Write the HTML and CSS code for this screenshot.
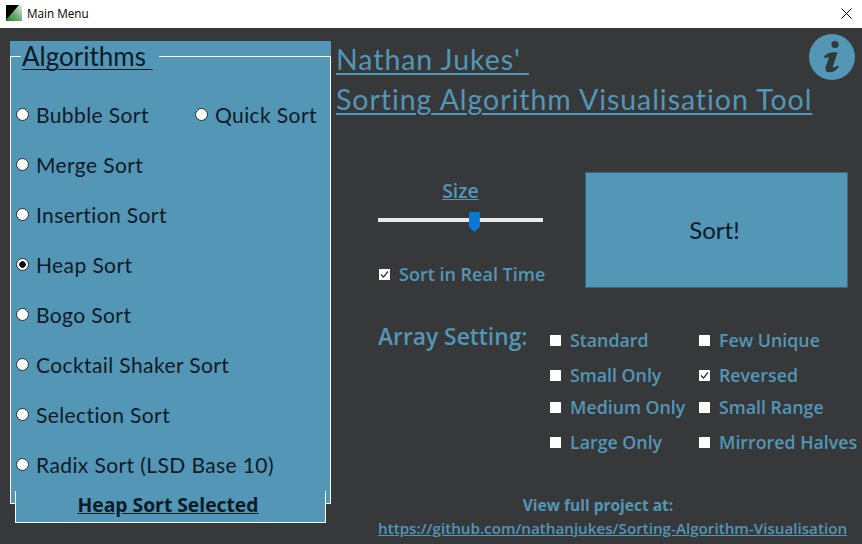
FILE: index.html
```html
<!DOCTYPE html>
<html lang="en">
<head>
    <meta charset="UTF-8">
    <title>Main Menu</title>
    <link rel="stylesheet" href="styles.css">
</head>
<body>
    <div class="titlebar">
        <svg class="app-icon" width="16" height="16" viewBox="0 0 16 16">
            <defs>
                <linearGradient id="corner" x1="0" y1="1" x2="1" y2="0">
                    <stop offset="0" stop-color="#0f8a1e"/>
                    <stop offset="0.55" stop-color="#7fb383"/>
                    <stop offset="1" stop-color="#e8ebe8"/>
                </linearGradient>
            </defs>
            <rect width="16" height="16" fill="url(#corner)"/>
            <polygon points="0,0 13,0 0,15" fill="#000"/>
        </svg>
        <span class="window-title">Main Menu</span>
        <svg class="close-icon" width="11" height="11" viewBox="0 0 11 11">
            <path d="M0.5 0.5L10.5 10.5M10.5 0.5L0.5 10.5" stroke="#000" stroke-width="1" fill="none"/>
        </svg>
    </div>

    <div class="window">
        <div class="side">
            <div class="panel">
                <fieldset class="algos">
                    <legend>Algorithms&nbsp;</legend>
                    <div class="algo-row first">
                        <label class="algo bubble"><input type="radio" name="algo"><span>Bubble Sort</span></label>
                        <label class="algo"><input type="radio" name="algo"><span>Quick Sort</span></label>
                    </div>
                    <div class="algo-row"><label class="algo"><input type="radio" name="algo"><span>Merge Sort</span></label></div>
                    <div class="algo-row"><label class="algo"><input type="radio" name="algo"><span>Insertion Sort</span></label></div>
                    <div class="algo-row"><label class="algo"><input type="radio" name="algo" checked><span>Heap Sort</span></label></div>
                    <div class="algo-row"><label class="algo"><input type="radio" name="algo"><span>Bogo Sort</span></label></div>
                    <div class="algo-row"><label class="algo"><input type="radio" name="algo"><span>Cocktail Shaker Sort</span></label></div>
                    <div class="algo-row"><label class="algo"><input type="radio" name="algo"><span>Selection Sort</span></label></div>
                    <div class="algo-row"><label class="algo"><input type="radio" name="algo"><span>Radix Sort (LSD Base 10)</span></label></div>
                </fieldset>
            </div>
            <div class="selected">Heap Sort Selected</div>
        </div>

        <div class="main">
            <div class="header">
                <h1>Nathan Jukes'&nbsp;<br>Sorting Algorithm Visualisation Tool</h1>
                <svg class="info-icon" width="46" height="46" viewBox="0 0 46 46">
                    <circle cx="23" cy="23" r="23" fill="#5396b6"/>
                    <circle cx="26" cy="10.5" r="3.6" fill="#33383c"/>
                    <path d="M15 22.5C18 18.5 23 18 28.5 18.5L24 32C23.5 34 25.5 34 28.5 31.5L30 33C26 38 21.5 39 18.5 38C16 37 16 34.5 17 32L20 23.5C18.5 23 17 23.5 16 24.5Z" fill="#33383c"/>
                </svg>
            </div>

            <div class="controls">
                <div class="size-box">
                    <div class="size-label">Size</div>
                    <input class="size-slider" type="range" min="0" max="100" value="59">
                    <label class="realtime"><input type="checkbox" checked><span>Sort in Real Time</span></label>
                </div>
                <button class="sort-btn">Sort!</button>
            </div>

            <div class="settings">
                <div class="settings-title">Array Setting:</div>
                <div class="settings-grid">
                    <label class="opt"><input type="checkbox"><span>Standard</span></label>
                    <label class="opt"><input type="checkbox"><span>Few Unique</span></label>
                    <label class="opt"><input type="checkbox"><span>Small Only</span></label>
                    <label class="opt"><input type="checkbox" checked><span>Reversed</span></label>
                    <label class="opt"><input type="checkbox"><span>Medium Only</span></label>
                    <label class="opt"><input type="checkbox"><span>Small Range</span></label>
                    <label class="opt"><input type="checkbox"><span>Large Only</span></label>
                    <label class="opt"><input type="checkbox"><span>Mirrored Halves</span></label>
                </div>
            </div>

            <div class="project">
                <div class="project-label">View full project at:</div>
                <a class="project-link" href="#">https://github.com/nathanjukes/Sorting-Algorithm-Visualisation</a>
            </div>
        </div>
    </div>
</body>
</html>
```

FILE: styles.css
```css
html, body {
    margin: 0;
    height: 544px;
    overflow: hidden;
}

body {
    font-family: 'Open Sans', sans-serif;
    background-color: #37383a;
    color: #5396b6;
}

/* title bar */
.titlebar {
    height: 28px;
    background-color: #ffffff;
    display: flex;
    align-items: center;
    padding: 0 10px 2px 6px;
    box-sizing: border-box;
}

.app-icon {
    margin-right: 5px;
}

.window-title {
    font-size: 11.7px;
    color: #000000;
    flex-grow: 1;
}

.window {
    display: flex;
    height: 516px;
}

/* left panel */
.side {
    width: 321px;
    margin: 13px 0 0 10px;
    flex-shrink: 0;
}

.panel {
    background-color: #5396b6;
    height: 463px;
}

.algos {
    margin: 0;
    padding: 0 0 0 5px;
    height: 100%;
    box-sizing: border-box;
    border: 1px solid #ffffff;
    color: #0b1a26;
}

.algos legend {
    margin-left: 5px;
    padding: 0 6px 0 1px;
    font-family: 'Lato', sans-serif;
    font-size: 26px;
    line-height: 31px;
    text-decoration: underline;
    text-decoration-thickness: 1px;
    text-underline-offset: 3px;
}

.algo-row {
    display: flex;
    height: 50px;
    align-items: center;
}

.algo-row.first {
    margin-top: 17px;
}

.algo {
    display: flex;
    align-items: center;
    font-family: 'Lato', sans-serif;
    font-size: 21px;
    letter-spacing: 0.4px;
    white-space: nowrap;
}

.algo.bubble {
    width: 179px;
}

.algo input {
    appearance: none;
    -webkit-appearance: none;
    box-sizing: border-box;
    width: 13px;
    height: 13px;
    margin: 0 7px 0 0;
    border-radius: 50%;
    background-color: #ffffff;
    border: 1px solid #20303a;
    flex-shrink: 0;
}

.algo input:checked {
    background-image: radial-gradient(circle, #111111 0, #111111 3px, transparent 3.5px);
}

.selected {
    margin: -13px 5px 0;
    height: 32px;
    box-sizing: border-box;
    padding-right: 5px;
    position: relative;
    background-color: #5396b6;
    border: 1px solid #ffffff;
    border-top: none;
    text-align: center;
    font-size: 19.3px;
    font-weight: 700;
    line-height: 28px;
    color: #0b1a26;
    text-decoration: underline;
}

/* right side */
.main {
    flex-grow: 1;
    min-width: 0;
    padding: 0 7px 0 5px;
    display: flex;
    flex-direction: column;
}

.header {
    display: flex;
    justify-content: space-between;
    align-items: flex-start;
    height: 144px;
}

h1 {
    width: 470px;
    flex-shrink: 0;
    margin: 11px 0 0;
    font-family: 'Lato', sans-serif;
    font-size: 28.5px;
    line-height: 40px;
    font-weight: 400;
    letter-spacing: 0.95px;
    text-decoration: underline;
    text-decoration-thickness: 2px;
    text-underline-offset: 3px;
    white-space: nowrap;
}

.info-icon {
    flex-shrink: 0;
    margin-top: 6px;
}

.controls {
    display: flex;
    padding-left: 42px;
}

.size-box {
    width: 207px;
}

.size-label {
    width: 165px;
    text-align: center;
    font-size: 19.5px;
    font-weight: 600;
    line-height: 26px;
    margin-top: 6px;
    text-decoration: underline;
    text-decoration-thickness: 1px;
}

.size-slider {
    appearance: none;
    -webkit-appearance: none;
    display: block;
    width: 165px;
    height: 20px;
    margin: 6px 0 0;
    background: transparent;
}

.size-slider::-webkit-slider-runnable-track {
    height: 4px;
    background-color: #e8e8e8;
}

.size-slider::-webkit-slider-thumb {
    -webkit-appearance: none;
    width: 11px;
    height: 20px;
    margin-top: -6px;
    background-color: #0a78d7;
    clip-path: polygon(0 0, 100% 0, 100% 75%, 50% 100%, 0 75%);
}

.realtime {
    display: flex;
    align-items: center;
    margin-top: 32px;
    padding-left: 1px;
    font-size: 18px;
    font-weight: 600;
    line-height: 24px;
    white-space: nowrap;
}

.sort-btn {
    width: 263px;
    height: 116px;
    margin: 0;
    padding: 0 4px 2px 0;
    background-color: #5396b6;
    border: 1px solid #2f6a87;
    font-family: 'Lato', sans-serif;
    font-size: 24px;
    color: #0b1a26;
}

/* shared checkbox */
.realtime input,
.opt input {
    appearance: none;
    -webkit-appearance: none;
    width: 11px;
    height: 11px;
    margin: 0 9px 0 0;
    background-color: #ffffff;
    flex-shrink: 0;
}

.realtime input:checked,
.opt input:checked {
    background-image: url("data:image/svg+xml,%3Csvg xmlns='http://www.w3.org/2000/svg' viewBox='0 0 11 11'%3E%3Cpath d='M2 5.5L4.5 8L9 2.5' fill='none' stroke='%23333' stroke-width='1.2'/%3E%3C/svg%3E");
}

.settings {
    display: flex;
    padding-left: 42px;
    margin-top: 33px;
}

.settings-title {
    width: 172px;
    flex-shrink: 0;
    font-size: 22.8px;
    font-weight: 600;
    line-height: 32px;
    white-space: nowrap;
}

.settings-grid {
    display: grid;
    grid-template-columns: 149px auto;
    grid-template-rows: 35px 32px 35px 32px;
    margin-top: 7px;
}

.opt {
    display: flex;
    align-items: center;
    height: 24px;
    font-size: 17.8px;
    font-weight: 600;
    white-space: nowrap;
}

.project {
    margin-top: 31px;
    padding-left: 42px;
    font-size: 15.5px;
    font-weight: 700;
    line-height: 24px;
}

.project-label {
    width: 440px;
    text-align: center;
}

.project-link {
    display: block;
    margin-top: -1px;
    font-size: 15.2px;
    font-weight: 600;
    color: #5396b6;
    white-space: nowrap;
}
```
